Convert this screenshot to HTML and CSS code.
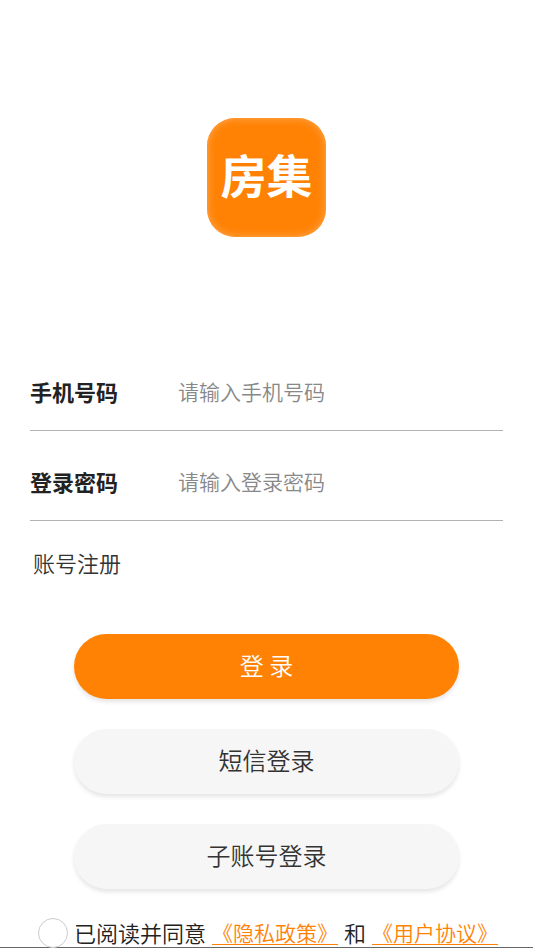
FILE: index.html
```html
<!DOCTYPE html>
<html lang="zh-CN">
<head>
<meta charset="utf-8">
<meta name="viewport" content="width=device-width, initial-scale=1">
<title>登录</title>
<link rel="stylesheet" href="styles.css">
</head>
<body>
<main class="page">
  <h1 class="logo">房集</h1>
  <form class="form">
    <div class="field">
      <label class="field-label" for="phone">手机号码</label>
      <input class="field-input" id="phone" type="tel" placeholder="请输入手机号码">
    </div>
    <div class="field">
      <label class="field-label" for="password">登录密码</label>
      <input class="field-input" id="password" type="password" placeholder="请输入登录密码">
    </div>
    <a class="register" href="#register">账号注册</a>
    <div class="actions">
      <button class="button button-primary" type="submit">登 录</button>
      <button class="button" type="button">短信登录</button>
      <button class="button" type="button">子账号登录</button>
    </div>
    <div class="agreement">
      <input class="agree-check" id="agree" type="checkbox">
      <label class="agree-label" for="agree">已阅读并同意</label>
      <a class="policy" href="#privacy">《隐私政策》</a>
      <span>和</span>
      <a class="policy" href="#terms">《用户协议》</a>
    </div>
  </form>
</main>
</body>
</html>
```
FILE: styles.css
```css
* {
  box-sizing: border-box;
}

body {
  margin: 0;
  background: #fff;
  color: #222;
  font-family: "Noto Sans CJK SC", sans-serif;
  font-size: 22px;
  font-weight: 350;
  line-height: 30px;
}

.page {
  min-height: 100vh;
  padding: 118px 30px 0;
  border-bottom: 1px solid #666;
}

.logo {
  display: flex;
  align-items: center;
  justify-content: center;
  width: 119px;
  height: 119px;
  margin: 0 auto 104px;
  padding-bottom: 10px;
  border-radius: 28px;
  background: #ff8205;
  box-shadow: inset 0 0 8px #ffab58;
  color: #fff;
  font-size: 46px;
  font-weight: 700;
  line-height: 46px;
}

.form {
  display: flex;
  flex-direction: column;
}

.field {
  display: flex;
  align-items: center;
  height: 76px;
  margin-top: 14px;
  padding-bottom: 4px;
  border-bottom: 1px solid #b2b2b2;
}

.field-label {
  flex: 0 0 148px;
  font-weight: 700;
}

.field-input {
  flex: 1;
  min-width: 0;
  height: 40px;
  padding: 0;
  border: 0;
  outline: 0;
  background: none;
  color: #222;
  font: inherit;
  font-size: 21px;
}

.field-input::placeholder {
  color: #888;
  opacity: 1;
}

.register {
  align-self: flex-start;
  margin: 26px 3px 0;
  color: #333;
  text-decoration: none;
}

.actions {
  display: flex;
  flex-direction: column;
  gap: 30px;
  margin: 57px 44px 29px;
}

.button {
  height: 65px;
  padding: 0 0 4px;
  border: 0;
  border-radius: 33px;
  background: #f6f6f6;
  box-shadow: 0 3px 4px rgba(0, 0, 0, 0.1);
  color: #333;
  font: inherit;
  font-size: 24px;
}

.button-primary {
  background: #ff8205;
  color: #fff;
}

.agreement {
  display: flex;
  align-items: center;
  gap: 6px;
  height: 29px;
  padding-left: 8px;
  line-height: 26px;
  white-space: nowrap;
}

.agree-check {
  flex: none;
  width: 30px;
  height: 30px;
  margin: 0;
  appearance: none;
  border: 1px solid #ccc;
  border-radius: 50%;
  background: #fff;
}

.agree-check:checked {
  background: #ff8205;
}

.agree-label,
.agreement span,
.policy {
  padding-bottom: 2px;
}

.policy {
  color: #ff8205;
  font-size: 21px;
  text-decoration-thickness: 1px;
  text-underline-offset: 3px;
}
```
